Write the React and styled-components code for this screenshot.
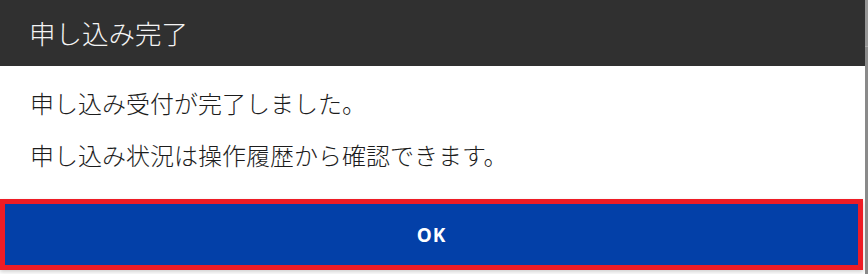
import React from "react";
import styled, { createGlobalStyle } from "styled-components";

const GlobalStyle = createGlobalStyle`
  html, body {
    margin: 0;
    padding: 0;
    background: #fff;
  }
  body {
    font-family: "Noto Sans CJK JP", "Noto Sans", sans-serif;
  }
`;

const Page = styled.div`
  display: flex;
  width: 868px;
  height: 274px;
  overflow: hidden;
`;

const Dialog = styled.div`
  width: 865px;
  display: flex;
  flex-direction: column;
`;

const Header = styled.div`
  height: 66px;
  background-color: #303030;
  display: flex;
  align-items: center;
  padding-left: 29px;
`;

const Title = styled.h2`
  margin: 0;
  color: #f4f4f4;
  font-size: 26.5px;
  font-weight: 300;
  line-height: 1;
`;

const Body = styled.div`
  display: flex;
  flex-direction: column;
  gap: 16px;
  padding: 19px 30px 26px;
`;

const Message = styled.p`
  margin: 0;
  color: #1c1c1c;
  font-size: 24px;
  font-weight: 300;
  line-height: 36px;
`;

const Footer = styled.div`
  padding-right: 2px;
`;

const OkButton = styled.button`
  display: block;
  width: 100%;
  height: 71px;
  border: 5px solid #ee1c25;
  background-color: #0340a8;
  color: #fff;
  font-family: "Noto Sans", "Noto Sans CJK JP", sans-serif;
  font-size: 19px;
  font-weight: 700;
  letter-spacing: 1px;
  box-shadow: 0 2px 4px rgba(0, 0, 0, 0.18);
  cursor: pointer;
`;

const Scrollbar = styled.div`
  width: 3px;
  background-color: #8a8a8a;
  display: flex;
  flex-direction: column;
`;

const ScrollTop = styled.div`
  height: 46px;
  background-color: #959595;
  border-bottom: 1px solid #a8a8a8;
`;

const App = () => {
  return (
    <>
      <GlobalStyle />
      <Page>
        <Dialog>
          <Header>
            <Title>申し込み完了</Title>
          </Header>
          <Body>
            <Message>申し込み受付が完了しました。</Message>
            <Message>申し込み状況は操作履歴から確認できます。</Message>
          </Body>
          <Footer>
            <OkButton>OK</OkButton>
          </Footer>
        </Dialog>
        <Scrollbar>
          <ScrollTop />
        </Scrollbar>
      </Page>
    </>
  );
};

export default App;
